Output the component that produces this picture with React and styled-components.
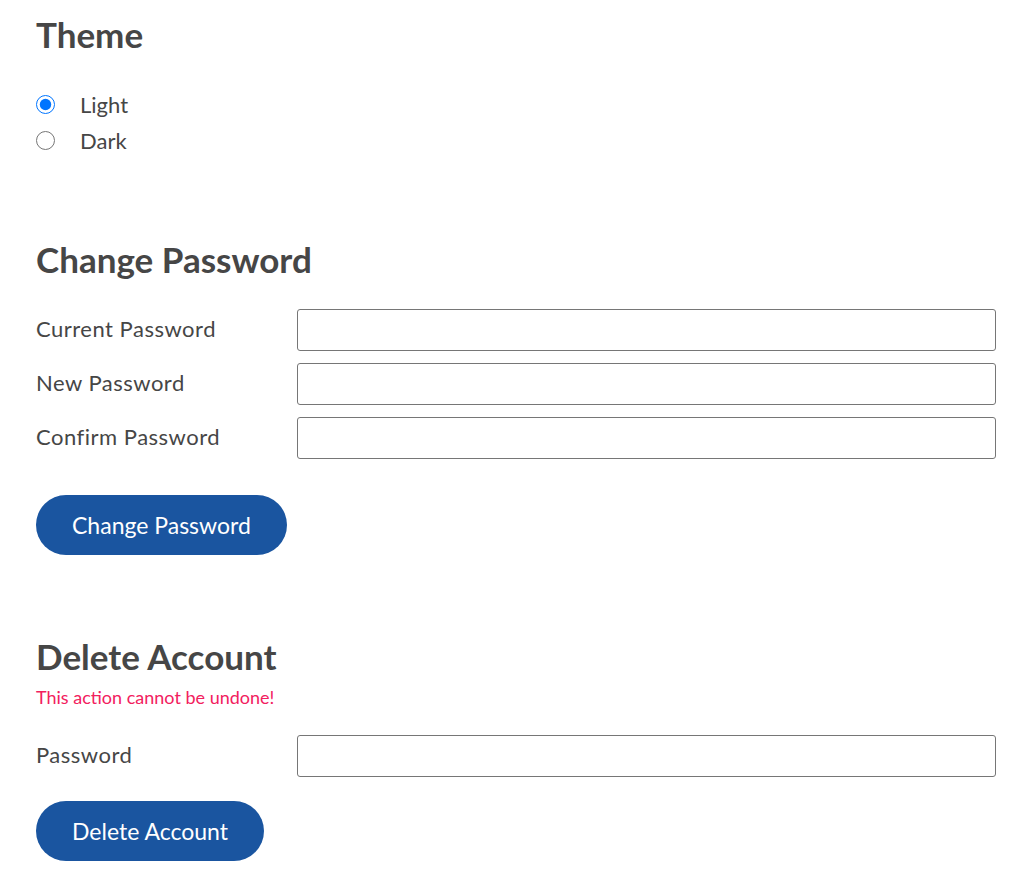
import React from 'react';
import styled, { createGlobalStyle } from 'styled-components';

const GlobalStyle = createGlobalStyle`
  body {
    margin: 0;
    background: #ffffff;
    font-family: Lato, "Noto Sans", sans-serif;
    color: #464646;
  }
`;

const Page = styled.div`
  width: 960px;
  padding: 12px 36px 20px 36px;
`;

const Section = styled.section`
  margin-bottom: ${(p) => p.$gap || 0}px;
`;

const Heading = styled.h2`
  margin: 0;
  font-size: 35px;
  line-height: 44px;
  font-weight: 700;
  color: #464646;
`;

const RadioList = styled.div`
  display: flex;
  flex-direction: column;
  margin-top: 30px;
`;

const RadioRow = styled.label`
  display: flex;
  align-items: center;
  height: 36px;
  font-size: 22px;
  color: #464646;
  cursor: pointer;
`;

const Radio = styled.input`
  width: 19px;
  height: 19px;
  margin: 0 25px 0 0;
  accent-color: #0075ff;
`;

const Form = styled.div`
  display: flex;
  flex-direction: column;
  gap: 12px;
  margin-top: ${(p) => p.$top || 0}px;
`;

const FieldRow = styled.div`
  display: grid;
  grid-template-columns: 261px 1fr;
  align-items: center;
`;

const Label = styled.label`
  font-size: 22px;
  letter-spacing: 0.5px;
  color: #464646;
  padding-bottom: 4px;
`;

const Input = styled.input`
  height: 42px;
  box-sizing: border-box;
  border: 1px solid #767676;
  border-radius: 3px;
  font-size: 18px;
  padding: 0 10px;
  outline: none;
`;

const Button = styled.button`
  margin-top: ${(p) => p.$top || 24}px;
  height: 60px;
  padding: 0 36px;
  border: none;
  border-radius: 30px;
  background: #1a55a0;
  color: #ffffff;
  font-family: Lato, "Noto Sans", sans-serif;
  font-size: 23px;
  cursor: pointer;
`;

const Warning = styled.p`
  margin: 7px 0 0 0;
  font-size: 18px;
  line-height: 24px;
  color: #f2205e;
`;

export default function App() {
  return (
    <>
      <GlobalStyle />
      <Page>
        <Section $gap={79}>
          <Heading>Theme</Heading>
          <RadioList>
            <RadioRow>
              <Radio type="radio" name="theme" defaultChecked />
              Light
            </RadioRow>
            <RadioRow>
              <Radio type="radio" name="theme" />
              Dark
            </RadioRow>
          </RadioList>
        </Section>

        <Section $gap={79}>
          <Heading>Change Password</Heading>
          <Form $top={28}>
            <FieldRow>
              <Label>Current Password</Label>
              <Input type="password" />
            </FieldRow>
            <FieldRow>
              <Label>New Password</Label>
              <Input type="password" />
            </FieldRow>
            <FieldRow>
              <Label>Confirm Password</Label>
              <Input type="password" />
            </FieldRow>
          </Form>
          <Button $top={36}>Change Password</Button>
        </Section>

        <Section>
          <Heading>Delete Account</Heading>
          <Warning>This action cannot be undone!</Warning>
          <Form $top={26}>
            <FieldRow>
              <Label>Password</Label>
              <Input type="password" />
            </FieldRow>
          </Form>
          <Button $top={24}>Delete Account</Button>
        </Section>
      </Page>
    </>
  );
}
